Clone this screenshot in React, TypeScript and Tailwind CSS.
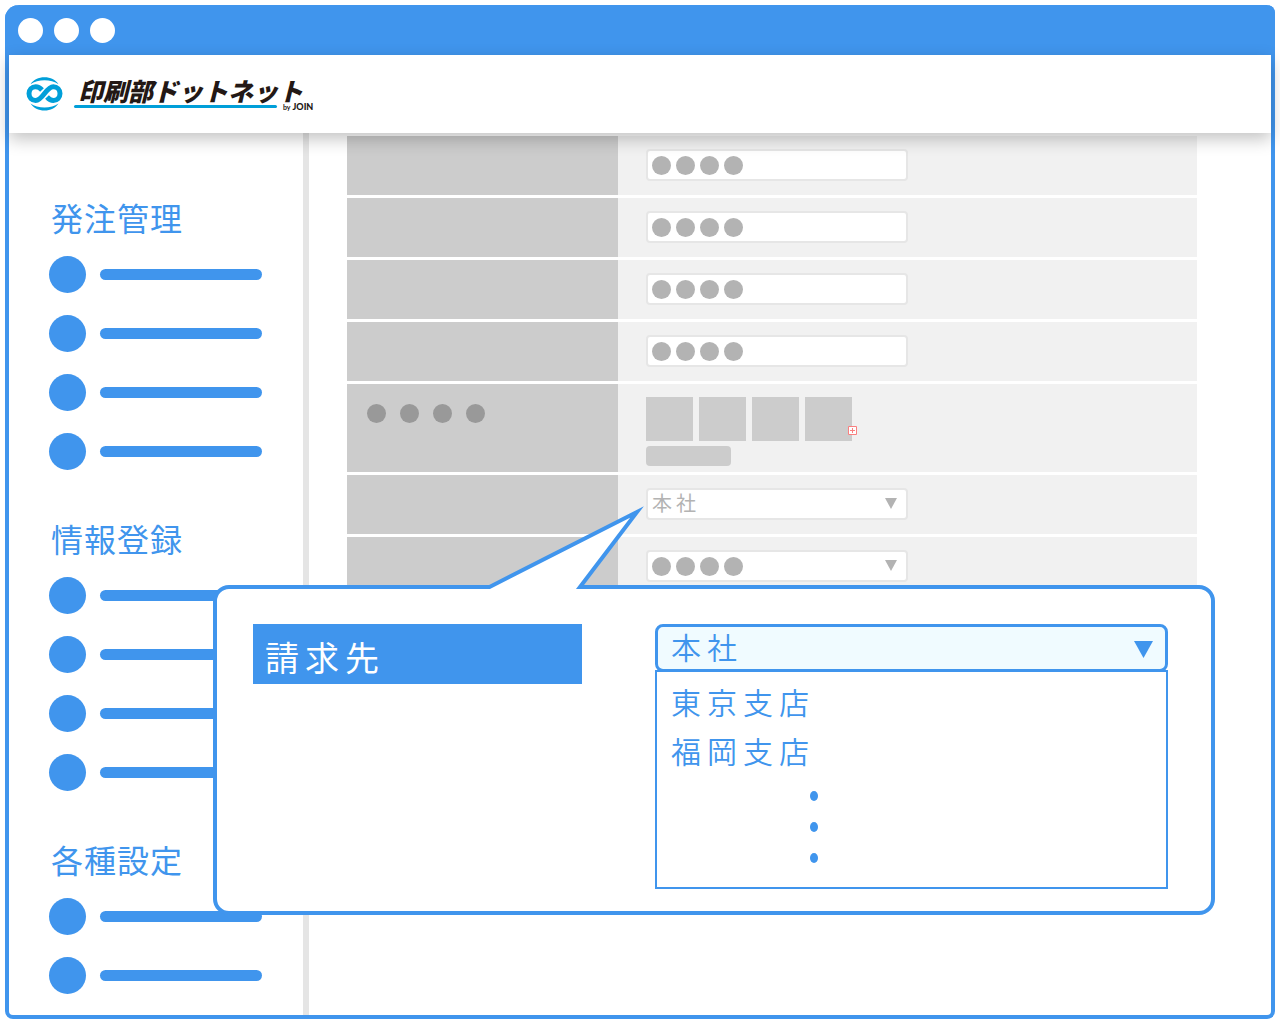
import { ReactNode } from 'react';

const JP = "font-['Noto_Sans_CJK_JP','Noto_Sans',sans-serif]";

interface MenuGroup {
  title: string;
  count: number;
}

const menuGroups: MenuGroup[] = [
  { title: '発注管理', count: 4 },
  { title: '情報登録', count: 4 },
  { title: '各種設定', count: 2 },
];

const branches = ['東京支店', '福岡支店'];

function LogoMark() {
  return (
    <svg className="h-[34px] w-[37px] shrink-0" viewBox="0 0 37 34" fill="none" stroke="#009fd9" aria-hidden="true">
      <path d="M4.500 7.200C7.500 2.700 12.500 .3 18.500 .3S29.500 2.700 32.500 7.200C29 4.800 23.500 3.200 18.500 3.200S8 4.800 4.500 7.200Z" fill="#009fd9" stroke="none" />
      <path d="M4.500 26.400C7.500 31 12.500 33.400 18.500 33.400S29.500 31 32.500 26.400C29 29 23.500 30.500 18.500 30.500S8 29 4.500 26.400Z" fill="#009fd9" stroke="none" />
      <path
        d="M16 13C14 10.800 12 9.700 9.700 9.700C5.800 9.700 3 12.800 3 16.600S5.800 23.500 9.700 23.500C16.800 23.500 20.200 9.700 27.300 9.700C31.200 9.700 34 12.800 34 16.600S31.200 23.500 27.300 23.500C25 23.500 23 22.300 21 20"
        strokeWidth="5"
      />
    </svg>
  );
}

function Logo() {
  return (
    <a href="#" className="flex items-center gap-[11px]">
      <LogoMark />
      <span className="flex flex-col">
        <span className="pl-1 text-[25px] leading-[25px] font-black text-[#231815] italic">印刷部ドットネット</span>
        <span className="flex h-2 items-center gap-[6px]">
          <span className="h-[3px] w-[203px] rounded-full bg-[#009fd9]" />
          <span className="font-['Lato',sans-serif] text-[9px] leading-none font-black text-[#231815]">
            <span className="text-[7px] font-bold">by</span> JOIN
          </span>
        </span>
      </span>
    </a>
  );
}

function Sidebar() {
  return (
    <nav className="flex w-[300px] shrink-0 flex-col gap-[52px] border-r-[6px] border-[#e5e5e5] pt-[68px] pr-10 pb-[21px] pl-10">
      {menuGroups.map((group) => (
        <section key={group.title} className="flex flex-col gap-[23px]">
          <h2 className="pl-[2px] text-[32px] leading-[32px] tracking-[1px] text-[#4095ed]">{group.title}</h2>
          <ul className="flex flex-col gap-[22px]">
            {Array.from({ length: group.count }, (_, i) => (
              <li key={i} className="flex items-center gap-[14px]">
                <span className="size-[37px] shrink-0 rounded-full bg-[#4095ed]" />
                <span className="h-[11px] w-[162px] rounded-full bg-[#4095ed]" />
              </li>
            ))}
          </ul>
        </section>
      ))}
    </nav>
  );
}

function Arrow({ className }: { className: string }) {
  return (
    <svg className={`pointer-events-none absolute ${className}`} viewBox="0 0 12 11" preserveAspectRatio="none" fill="currentColor" aria-hidden="true">
      <path d="M0 0H12L6 11Z" />
    </svg>
  );
}

// 入力欄の伏せ字
function Dots() {
  return (
    <span className="pointer-events-none absolute inset-y-0 left-[6px] flex items-center gap-[5px]">
      {[0, 1, 2, 3].map((i) => (
        <span key={i} className="size-[19px] rounded-full bg-[#b3b3b3]" />
      ))}
    </span>
  );
}

function Row({ label, children }: { label?: ReactNode; children: ReactNode }) {
  return (
    <div className="flex min-h-[59px]">
      <div className="w-[271px] shrink-0 bg-[#cccccc] pt-5 pl-5">{label}</div>
      <div className="flex flex-1 flex-col bg-[#f1f1f1] pt-[13px] pb-[6px] pl-7">{children}</div>
    </div>
  );
}

const fieldClass = 'block h-8 w-full appearance-none rounded border-2 border-[#e6e6e6] bg-white px-1';

function TextField({ name }: { name: string }) {
  return (
    <div className="relative w-[262px]">
      <input type="text" aria-label={name} className={fieldClass} />
      <Dots />
    </div>
  );
}

function OrderForm() {
  return (
    <form className="flex min-w-0 flex-1 flex-col gap-[3px] pt-[3px] pr-[74px] pl-[38px]">
      {['field1', 'field2', 'field3', 'field4'].map((name) => (
        <Row key={name}>
          <TextField name={name} />
        </Row>
      ))}

      <Row
        label={
          <div className="flex gap-[14px]">
            {[0, 1, 2, 3].map((i) => (
              <span key={i} className="size-[19px] rounded-full bg-[#999999]" />
            ))}
          </div>
        }
      >
        <div className="flex gap-[6px]">
          {[0, 1, 2, 3].map((i) => (
            <div key={i} className="relative h-[44px] w-[47px] bg-[#cccccc]">
              {i === 3 && (
                <svg className="absolute -right-[5px] bottom-[6px] size-[9px]" viewBox="0 0 9 9" fill="white" stroke="#f98080" aria-hidden="true">
                  <path d="M.5 .5H8.500V8.500H.5ZM4.500 2V7M2 4.500H7" />
                </svg>
              )}
            </div>
          ))}
        </div>
        <button type="button" aria-label="upload" className="mt-[5px] h-5 w-[85px] rounded bg-[#cccccc]" />
      </Row>

      <Row>
        <div className="relative w-[262px]">
          <select aria-label="office" className={`${fieldClass} pb-[2px] text-[20px] leading-[26px] tracking-[4px] text-[#b3b3b3]`}>
            <option>本社</option>
          </select>
          <Arrow className="top-[10px] right-[11px] h-[11px] w-3 text-[#b3b3b3]" />
        </div>
      </Row>
      <Row>
        <div className="relative w-[262px]">
          <select aria-label="section" className={fieldClass} />
          <Dots />
          <Arrow className="top-[10px] right-[11px] h-[11px] w-3 text-[#b3b3b3]" />
        </div>
      </Row>
    </form>
  );
}

// 請求先の拡大表示
function Callout() {
  return (
    <div className="absolute top-[452px] right-[56px] left-[204px] flex h-[330px] items-start justify-between rounded-2xl border-4 border-[#4095ed] bg-white pt-[35px] pr-[43px] pl-9">
      <svg className="absolute -top-[89px] left-[263px] h-[90px] w-[170px]" viewBox="0 0 170 90" aria-hidden="true">
        <path d="M0 87H9.500L157 12L100 87H170V90H0Z" fill="white" />
        <path d="M0 87H9.500L157 12L100 87H170" fill="none" stroke="#4095ed" strokeWidth="4" strokeMiterlimit="10" />
      </svg>

      <label htmlFor="billing" className="flex h-[60px] w-[329px] items-center bg-[#4095ed] px-3 pt-[6px] text-[34px] leading-[40px] tracking-[6px] text-white">
        請求先
      </label>

      <div className="w-[513px]">
        <div className="relative">
          <select
            id="billing"
            className="block h-12 w-full appearance-none rounded-lg border-[3px] border-[#4095ed] bg-[#f0fbff] px-[13px] pb-1 text-[30px] leading-[38px] font-[350] tracking-[6px] text-[#4095ed]"
          >
            <option>本社</option>
          </select>
          <Arrow className="top-[17px] right-[15px] h-[17px] w-[19px] text-[#4095ed]" />
        </div>
        <div className="-mt-[2px] border-2 border-[#4095ed] px-[14px] pt-[5px] pb-6 text-[#4095ed]">
          <ul>
            {branches.map((name) => (
              <li key={name} className="text-[30px] leading-[49px] font-[350] tracking-[6px]">
                {name}
              </li>
            ))}
          </ul>
          <div className="mt-4 ml-[139px] flex flex-col gap-[21px]">
            {[0, 1, 2].map((i) => (
              <span key={i} className="h-[10px] w-2 rounded-[50%] bg-[#4095ed]" />
            ))}
          </div>
        </div>
      </div>
    </div>
  );
}

export default function App() {
  return (
    <div className={`min-h-screen overflow-hidden bg-white p-[5px] ${JP}`}>
      <div className="rounded-[14px_8px_8px_8px] border-4 border-t-0 border-[#4095ed] bg-white">
        <div className="-mx-1 flex h-[50px] items-center gap-[11px] rounded-[14px_8px_0_0] bg-[#4095ed] px-[13px]">
          {[0, 1, 2].map((i) => (
            <span key={i} className="size-[25px] rounded-full bg-white" />
          ))}
        </div>
        <header className="relative z-10 flex h-[78px] items-center bg-white px-[17px] shadow-[0_6px_16px_rgba(0,0,0,0.24)]">
          <Logo />
        </header>
        <div className="relative flex">
          <Sidebar />
          <OrderForm />
          <Callout />
        </div>
      </div>
    </div>
  );
}
